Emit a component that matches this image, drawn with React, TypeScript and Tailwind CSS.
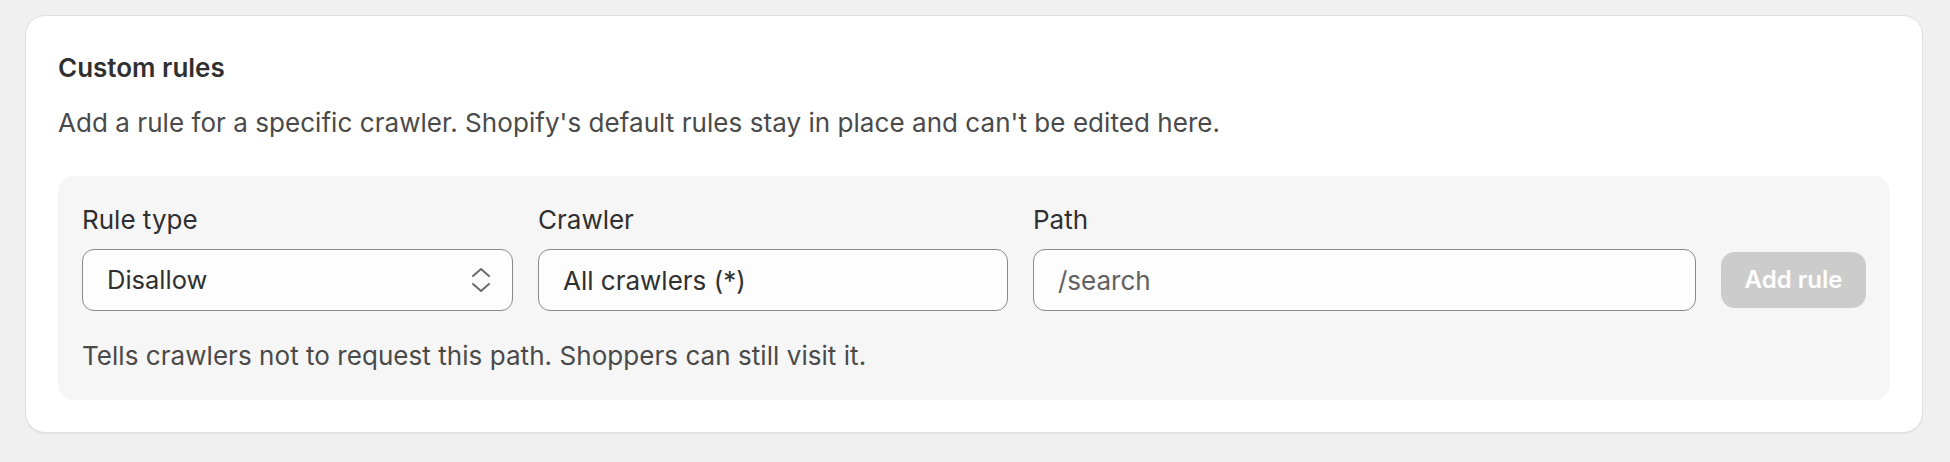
import React from "react";

function UpDownIcon() {
  return (
    <svg width="20" height="28" viewBox="0 0 20 28" fill="none" className="shrink-0">
      <path d="M2 10 L10 3 L18 10" stroke="#6b6b6b" strokeWidth="2" strokeLinecap="round" strokeLinejoin="round" />
      <path d="M2 18 L10 25 L18 18" stroke="#6b6b6b" strokeWidth="2" strokeLinecap="round" strokeLinejoin="round" />
    </svg>
  );
}

export default function App() {
  return (
    <div className="min-h-[462px] w-full bg-[#f0f0f0] pl-[25px] pr-[27px] pt-[15px] font-['Inter',sans-serif] antialiased">
      <div className="rounded-[20px] border border-[#e0e0e0] bg-white px-[32px] pt-[32px] pb-[32px] shadow-[0_1px_0_#e3e3e3]">
        <h2 className="text-[26px] font-semibold leading-[40px] text-[#303030]">Custom rules</h2>
        <p className="mt-[19px] text-[26px] leading-[32px] tracking-[0.05px] text-[#4a4a4a]">
          Add a rule for a specific crawler. Shopify's default rules stay in place and can't be edited here.
        </p>
        <div className="mt-[37px] rounded-[16px] bg-[#f6f6f6] px-[24px] pt-[28px] pb-[28px]">
          <div className="flex items-end gap-[25px]">
            <div className="flex w-[431px] flex-col">
              <label className="mb-[13px] text-[26px] leading-[32px] text-[#303030]">Rule type</label>
              <div className="flex h-[62px] items-center justify-between rounded-[12px] border border-[#8a8a8a] bg-[#fdfdfd] pl-[24px] pr-[21px]">
                <span className="text-[25.5px] text-[#303030]">Disallow</span>
                <UpDownIcon />
              </div>
            </div>
            <div className="flex w-[470px] flex-col">
              <label className="mb-[13px] text-[26px] leading-[32px] text-[#303030]">Crawler</label>
              <div className="flex h-[62px] items-center rounded-[12px] border border-[#8a8a8a] bg-[#fdfdfd] px-[24px]">
                <span className="text-[26px] text-[#303030]">All crawlers (*)</span>
              </div>
            </div>
            <div className="flex flex-1 flex-col">
              <label className="mb-[13px] text-[26px] leading-[32px] text-[#303030]">Path</label>
              <div className="flex h-[62px] items-center rounded-[12px] border border-[#8a8a8a] bg-[#fdfdfd] px-[24px]">
                <span className="text-[26px] text-[#616161]">/search</span>
              </div>
            </div>
            <div className="flex h-[62px] items-center">
              <button className="h-[56px] w-[145px] rounded-[14px] bg-[#cccccc] text-[24px] font-semibold text-white">
                Add rule
              </button>
            </div>
          </div>
          <p className="mt-[29px] text-[26px] leading-[32px] tracking-[0.05px] text-[#4a4a4a]">
            Tells crawlers not to request this path. Shoppers can still visit it.
          </p>
        </div>
      </div>
    </div>
  );
}
